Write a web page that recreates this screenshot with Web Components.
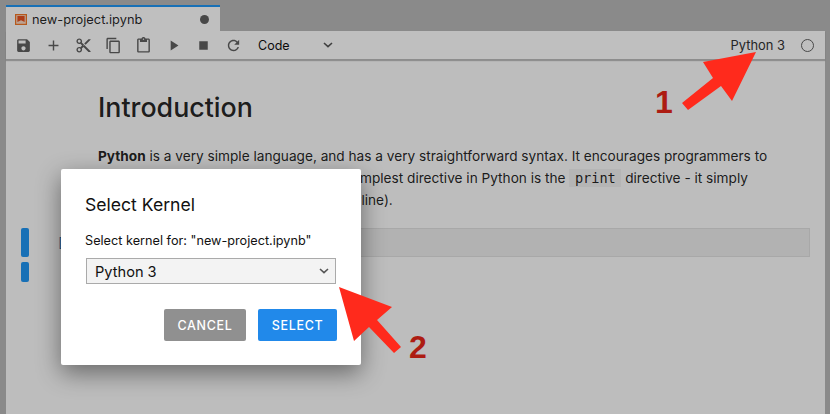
<!DOCTYPE html>
<html lang="en">
<head>
  <meta charset="UTF-8">
  <title>new-project.ipynb</title>
  <style>
    html, body { margin: 0; height: 100%; }
    body { width: 830px; height: 414px; overflow: hidden; position: relative; font-family: Inter, "Liberation Sans", sans-serif; }
  </style>
</head>
<body>

<nb-app>
  <nb-tab slot="tab">new-project.ipynb</nb-tab>
  <nb-toolbar slot="toolbar"></nb-toolbar>
  <nb-document>
    <h1 slot="title">Introduction</h1>
    <span slot="line"><b>Python</b> is a very simple language, and has a very straightforward syntax. It encourages programmers to</span>
    <span slot="line" style="padding-left:1px">program without boilerplate code. The simplest directive in Python is the <nb-code>print</nb-code> directive - it simply</span>
    <span slot="line" style="padding-left:225px">a newline).</span>
  </nb-document>
</nb-app>
<nb-dialog></nb-dialog>
<nb-callouts></nb-callouts>

<script>
  const ICONS = {
    save: 'M17 3H5c-1.11 0-2 .9-2 2v14c0 1.1.89 2 2 2h14c1.1 0 2-.9 2-2V7l-4-4zm-5 16c-1.66 0-3-1.34-3-3s1.34-3 3-3 3 1.34 3 3-1.34 3-3 3zm3-10H5V5h10v4z',
    add: 'M19 13h-6v6h-2v-6H5v-2h6V5h2v6h6v2z',
    cut: 'M9.64 7.64c.23-.5.36-1.05.36-1.64 0-2.21-1.79-4-4-4S2 3.79 2 6s1.79 4 4 4c.59 0 1.14-.13 1.64-.36L10 12l-2.36 2.36C7.14 14.13 6.59 14 6 14c-2.21 0-4 1.79-4 4s1.79 4 4 4 4-1.79 4-4c0-.59-.13-1.14-.36-1.64L12 14l7 7h3v-1L9.64 7.64zM6 8c-1.1 0-2-.89-2-2s.9-2 2-2 2 .89 2 2-.9 2-2 2zm0 12c-1.1 0-2-.89-2-2s.9-2 2-2 2 .89 2 2-.9 2-2 2zm6-7.5c-.28 0-.5-.22-.5-.5s.22-.5.5-.5.5.22.5.5-.22.5-.5.5zM19 3l-6 6 2 2 7-7V3z',
    copy: 'M16 1H4c-1.1 0-2 .9-2 2v14h2V3h12V1zm3 4H8c-1.1 0-2 .9-2 2v14c0 1.1.9 2 2 2h11c1.1 0 2-.9 2-2V7c0-1.1-.9-2-2-2zm0 16H8V7h11v14z',
    paste: 'M19 2h-4.18C14.4.84 13.3 0 12 0c-1.3 0-2.4.84-2.82 2H5c-1.1 0-2 .9-2 2v16c0 1.1.9 2 2 2h14c1.1 0 2-.9 2-2V4c0-1.1-.9-2-2-2zm-7 0c.55 0 1 .45 1 1s-.45 1-1 1-1-.45-1-1 .45-1 1-1zm7 18H5V4h2v3h10V4h2v16z',
    run: 'M8 5v14l11-7z',
    stop: 'M6 6h12v12H6z',
    refresh: 'M17.65 6.35C16.2 4.9 14.21 4 12 4c-4.42 0-7.99 3.58-7.99 8s3.57 8 7.99 8c3.73 0 6.84-2.55 7.73-6h-2.08c-.82 2.33-3.04 4-5.65 4-3.31 0-6-2.69-6-6s2.69-6 6-6c1.66 0 3.14.69 4.22 1.78L13 11h7V4l-2.35 2.35z'
  };
  const CHEVRON = '<svg width="10" height="6" viewBox="0 0 10 6"><path d="M1 1l4 3.6L9 1" fill="none" stroke="currentColor" stroke-width="1.6"/></svg>';

  class NbApp extends HTMLElement {
    constructor() {
      super();
      this.attachShadow({ mode: 'open' }).innerHTML = `
        <style>
          :host { display: flex; flex-direction: column; width: 830px; height: 414px; box-sizing: border-box; padding: 5px 5px 0 6px; background: #b8b8b8; position: relative; }
          .tabs { display: flex; height: 26px; flex: none; }
          .main { flex: 1; display: flex; flex-direction: column; background: #fff; min-height: 0; }
          .dim { position: absolute; inset: 0; background: rgba(0,0,0,.25); }
        </style>
        <div class="tabs"><slot name="tab"></slot></div>
        <div class="main">
          <slot name="toolbar"></slot>
          <slot></slot>
        </div>
        <div class="dim"></div>`;
    }
  }

  class NbTab extends HTMLElement {
    constructor() {
      super();
      this.attachShadow({ mode: 'open' }).innerHTML = `
        <style>
          :host { display: flex; align-items: center; width: 214px; box-sizing: border-box; border-top: 2px solid #2196f3; background: #fff; padding: 0 11px 0 9px; color: rgba(0,0,0,.87); font-size: 12.8px; }
          svg { flex: none; margin-right: 5px; }
          .name { flex: 1; }
          .dot { width: 9px; height: 9px; border-radius: 50%; background: #616161; }
        </style>
        <svg width="12" height="11" viewBox="0 0 12 11"><rect width="12" height="11" fill="#f37726"/><rect x="1.2" y="1.2" width="9.6" height="8.6" fill="#fbd9c2"/><path d="M2.4 2h7.2v6L6 6.3 2.4 8z" fill="#e8501f"/></svg>
        <span class="name"><slot></slot></span>
        <span class="dot"></span>`;
    }
  }

  class NbToolbar extends HTMLElement {
    constructor() {
      super();
      const buttons = ['save', 'add', 'cut', 'copy', 'paste', 'run', 'stop', 'refresh'].map(name => {
        return `<span class="btn"><svg width="17" height="17" viewBox="0 0 24 24"><path fill="#616161" d="${ICONS[name]}"/></svg></span>`;
      }).join('');
      this.attachShadow({ mode: 'open' }).innerHTML = `
        <style>
          :host { display: flex; align-items: center; flex: none; height: 28px; padding: 0 10px 0 2px; border-bottom: 1px solid #bdbdbd; box-shadow: 0 1px 1px rgba(0,0,0,.24); position: relative; font-size: 12.5px; color: rgba(0,0,0,.87); }
          .btn { width: 30px; height: 28px; display: flex; align-items: center; justify-content: center; }
          .type { display: flex; align-items: center; justify-content: space-between; width: 75px; margin-left: 10px; color: #111; }
          .type svg { color: #555; }
          .kernel { margin-left: auto; margin-right: 16px; color: #333; font-size: 12.9px; }
          .status { width: 11px; height: 11px; border: 1.3px solid #616161; border-radius: 50%; margin-right: 1px; }
        </style>
        ${buttons}
        <span class="type">Code ${CHEVRON}</span>
        <span class="kernel">Python 3</span>
        <span class="status"></span>`;
    }
  }

  class NbCode extends HTMLElement {
    constructor() {
      super();
      this.attachShadow({ mode: 'open' }).innerHTML = `
        <style>
          :host { display: inline-block; font: 13.6px/18px "DejaVu Sans Mono", monospace; padding: 0 5.5px; background: #f2f2f2; }
        </style>
        <slot></slot>`;
    }
  }

  class NbDocument extends HTMLElement {
    constructor() {
      super();
      this.attachShadow({ mode: 'open' }).innerHTML = `
        <style>
          :host { display: block; flex: 1; padding: 0 15px; color: rgba(0,0,0,.87); background: #fcfcfc; }
          .md { padding: 31px 0 0 77px; }
          ::slotted(h1) { font-size: 26.8px; font-weight: 500; line-height: 32px; margin: 0 0 22px; }
          ::slotted(span) { display: block; font-size: 13.65px; line-height: 22px; white-space: nowrap; }
          .cell { display: flex; align-items: center; margin-top: 17px; height: 29px; }
          .prompt { width: 64px; color: #2f6fa8; font: 13px "Liberation Mono", monospace; padding-left: 28px; box-sizing: border-box; }
          .input { flex: 1; height: 27px; background: #eee; border: 1px solid #e0e0e0; }
          .bar { width: 8px; background: #2196f3; border-radius: 2px; }
          .gutter { display: flex; flex-direction: column; gap: 5px; width: 8px; height: 54px; margin-bottom: -25px; align-self: flex-start; }
          .gutter .bar:first-child { height: 29px; }
          .gutter .bar:last-child { height: 20px; }
        </style>
        <div class="md"><slot name="title"></slot><slot name="line"></slot></div>
        <div class="cell">
          <div class="gutter"><div class="bar"></div><div class="bar"></div></div>
          <div class="prompt">[</div>
          <div class="input"></div>
        </div>`;
    }
  }

  class NbDialog extends HTMLElement {
    constructor() {
      super();
      this.attachShadow({ mode: 'open' }).innerHTML = `
        <style>
          :host { position: absolute; left: 61px; top: 169px; width: 300px; height: 196px; box-sizing: border-box; padding: 25px 24px 24px; display: flex; flex-direction: column; background: #fff; border-radius: 2px; box-shadow: 0 8px 24px rgba(0,0,0,.45); color: #111; }
          .title { font-size: 17.6px; line-height: 22px; }
          .label { font-size: 12.7px; line-height: 16px; margin-top: 17px; }
          .select { display: flex; align-items: center; justify-content: space-between; height: 26px; box-sizing: border-box; width: 250px; margin: 9px 0 0 1px; padding: 1px 6px 0 8px; background: #f3f3f3; border: 1px solid #aaa; font-size: 14.6px; }
          .select svg { color: #555; margin-top: -1px; }
          .actions { display: flex; justify-content: flex-end; gap: 12px; margin: 25px 0 0; }
          .btn { height: 32px; box-sizing: border-box; padding-top: 1px; display: flex; align-items: center; justify-content: center; border-radius: 2px; color: #fff; font-size: 12.5px; font-weight: 500; letter-spacing: .7px; }
          .cancel { width: 82px; background: #909090; }
          .ok { width: 79px; background: #2189ea; }
        </style>
        <div class="title">Select Kernel</div>
        <div class="label">Select kernel for: "new-project.ipynb"</div>
        <div class="select">Python 3 ${CHEVRON}</div>
        <div class="actions"><span class="btn cancel">CANCEL</span><span class="btn ok">SELECT</span></div>`;
    }
  }

  class NbCallouts extends HTMLElement {
    constructor() {
      super();
      this.attachShadow({ mode: 'open' }).innerHTML = `
        <style>
          :host { position: absolute; inset: 0; pointer-events: none; }
          svg { position: absolute; inset: 0; }
          span { position: absolute; color: #ad1c12; font: 700 32px/32px "Liberation Sans", sans-serif; }
        </style>
        <svg width="830" height="414">
          <path fill="#ff2a1c" d="M756 52L703 62L713 78L682 103L688 110L721 86L732 101Z"/>
          <path fill="#ff2a1c" d="M339 287L392 307L377 320L401 347L394 353L369 327L354 341Z"/>
        </svg>
        <span style="left:655px;top:86px">1</span>
        <span style="left:409px;top:331px">2</span>`;
    }
  }

  customElements.define('nb-app', NbApp);
  customElements.define('nb-tab', NbTab);
  customElements.define('nb-toolbar', NbToolbar);
  customElements.define('nb-code', NbCode);
  customElements.define('nb-document', NbDocument);
  customElements.define('nb-dialog', NbDialog);
  customElements.define('nb-callouts', NbCallouts);
</script>
</body>
</html>
